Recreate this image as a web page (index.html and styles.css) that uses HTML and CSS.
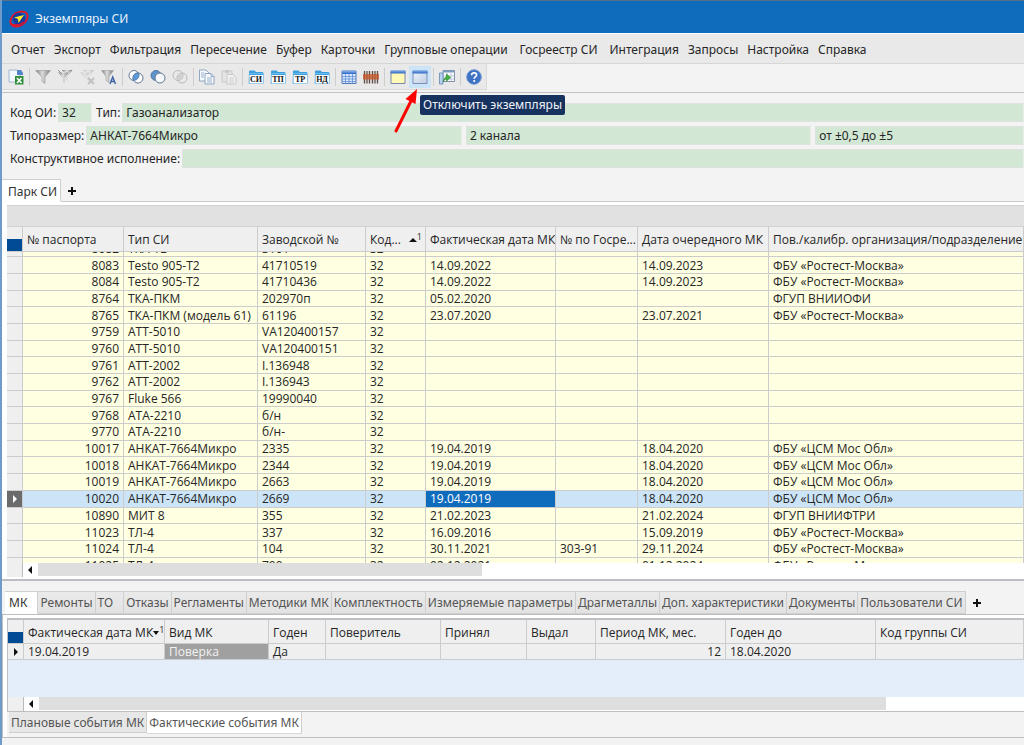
FILE: index.html
```html
<!DOCTYPE html>
<html lang="ru">
<head>
<meta charset="utf-8">
<title>Экземпляры СИ</title>
<link rel="stylesheet" href="styles.css">
</head>
<body>
<svg class="defs" width="0" height="0" aria-hidden="true">
  <defs>
    <linearGradient id="gray" x1="0" x2="1" y1="0" y2="0"><stop offset="0" stop-color="#777"/><stop offset=".45" stop-color="#ddd"/><stop offset="1" stop-color="#777"/></linearGradient>
    <linearGradient id="blue" x1="0" x2="0" y1="0" y2="1"><stop offset="0" stop-color="#7fb0ee"/><stop offset="1" stop-color="#2f66c4"/></linearGradient>
    <linearGradient id="pane" x1="0" x2="1" y1="0" y2="1"><stop offset="0" stop-color="#eef3fa"/><stop offset="1" stop-color="#bfcde2"/></linearGradient>
    <symbol id="folder" viewBox="0 0 16 16"><path d="M1 2.5Q1 1.500 2 1.500h4.500l1.500 1.500h6q1.500 0 1.500 1v10q0 1-1 1h-13q-.8 0-.8-1z" fill="#3f9fdc"/><path d="M1.500 6h13.500v8.500h-13.500z" fill="#fff"/><path d="M1 4.500h14" stroke="#69bdf0"/></symbol>
  </defs>
</svg>
<div class="window">
  <header class="titlebar">
    <svg class="logo" viewBox="0 0 22 20" width="22" height="20"><ellipse cx="11" cy="10" rx="9.500" ry="6.500" transform="rotate(-35 11 10)" fill="none" stroke="#e3152d" stroke-width="2"/><circle cx="11" cy="10" r="6.300" fill="#173a9c"/><path d="M3 15q7 3 13-2" fill="none" stroke="#e3152d" stroke-width="1.500"/><path d="M6 8.500l10-2.500-5.500 8-.5-4z" fill="#ffed28"/></svg>
    <h1 class="title">Экземпляры СИ</h1>
  </header>
  <nav class="menu">
    <button>Отчет</button><button>Экспорт</button><button>Фильтрация</button><button>Пересечение</button><button>Буфер</button><button>Карточки</button><button class="wide">Групповые операции</button><button class="wide">Госреестр СИ</button><button>Интеграция</button><button>Запросы</button><button>Настройка</button><button>Справка</button>
  </nav>
  <div class="toolbar-row">
    <div class="toolbar">
      <button class="tool" aria-label="Экспорт в Excel"><svg viewBox="0 0 16 16"><path d="M1 1h8l3 3v9H1z" fill="#f3f8ff" stroke="#a0b4d0"/><path d="M9 1h4l2 3v2h-6z" fill="#5484c8"/><path d="M7 7h8.500v8.500H7z" fill="#31903c"/><path d="M9 9l4.500 5M13.500 9L9 14" stroke="#fff" stroke-width="1.600"/></svg></button>
      <span class="sep"></span>
      <button class="tool" aria-label="Фильтр"><svg viewBox="0 0 16 16"><path d="M.5 1.500h15L10 8v6.500l-3-2V8z" fill="url(#gray)" stroke="#999" stroke-width=".6"/></svg></button>
      <button class="tool" aria-label="Фильтр по значению"><svg viewBox="0 0 16 16"><path d="M5 1h10.500l-5 6v5l-2-1.500V7z" fill="url(#gray)"/><path d="M.5 3h12L8 9v6l-2.800-2V9z" fill="url(#gray)" stroke="#f0f0f0" stroke-width=".7"/><path d="M1 1l4 4" stroke="#999"/></svg></button>
      <button class="tool faded" aria-label="Снять фильтр"><svg viewBox="0 0 16 16"><path d="M4 1h11l-5 6v5L8 10V7z" fill="url(#gray)"/><path d="M.5 3h11L7 9v5l-2-2V9z" fill="url(#gray)" stroke="#eee"/><path d="M9 9l6 6M15 9l-6 6" stroke="#888" stroke-width="2"/></svg></button>
      <button class="tool" aria-label="Автофильтр"><svg viewBox="0 0 16 16"><path d="M.5 1.500h12L8 7.500v6l-3-2v-4z" fill="url(#gray)" stroke="#999" stroke-width=".5"/><path d="M9 15l2.700-7L14.500 15M10 12.500h3.500" fill="none" stroke="#3d63a6" stroke-width="1.400"/></svg></button>
      <span class="sep"></span>
      <button class="tool" aria-label="Пересечение"><svg viewBox="0 0 16 16"><g fill="#fff" stroke="#607894"><circle cx="6" cy="6.500" r="5"/><circle cx="10" cy="9" r="5"/></g><path d="M5.300 7.300A5 5 0 0 1 10.700 4.100 5 5 0 0 1 10.400 8.800 5 5 0 0 1 5.600 11.400a5 5 0 0 1-.3-4.100z" fill="#5d9bd8" stroke="#47719d" stroke-width=".7"/></svg></button>
      <button class="tool" aria-label="Вычитание"><svg viewBox="0 0 16 16"><circle cx="6" cy="6.500" r="5" fill="#5d94cb" stroke="#53779f"/><circle cx="10" cy="9" r="5" fill="#f6f9fc" stroke="#607894"/></svg></button>
      <button class="tool faded" aria-label="Очистить пересечение"><svg viewBox="0 0 16 16"><g fill="none" stroke="#777"><circle cx="6" cy="6.500" r="5"/><circle cx="10" cy="9" r="5"/></g><path d="M5.300 9Q6 5 10.700 5 11 10 5.300 11z" fill="#aaa"/></svg></button>
      <span class="sep"></span>
      <button class="tool" aria-label="Копировать"><svg viewBox="0 0 16 16"><g fill="#f5f9ff" stroke="#879db8" stroke-width=".9"><path d="M.5 1h6.500l3 3v8H.5z"/><path d="M6 4.500h6l3 3V15H6z"/></g><path d="M2 4h3M2 6h3M2 8h3M8 9h5M8 11h5M8 13h5M12 4.500v3h3" fill="none" stroke="#91a8c3" stroke-width=".9"/></svg></button>
      <button class="tool faded" aria-label="Вставить"><svg viewBox="0 0 16 16"><path d="M1 2h10v11H1z" fill="#ddd" stroke="#999"/><path d="M4 1h4v3H4z" fill="#999"/><path d="M6 5.500h6l3 3V15H6z" fill="#fff" stroke="#999"/><path d="M8 9h5M8 11h5M8 13h5" stroke="#aaa"/></svg></button>
      <span class="sep"></span>
      <button class="tool folder"><svg viewBox="0 0 16 16"><use href="#folder"/></svg><span>СИ</span></button>
      <button class="tool folder"><svg viewBox="0 0 16 16"><use href="#folder"/></svg><span>ТП</span></button>
      <button class="tool folder"><svg viewBox="0 0 16 16"><use href="#folder"/></svg><span>ТР</span></button>
      <button class="tool folder"><svg viewBox="0 0 16 16"><use href="#folder"/></svg><span>НД</span></button>
      <span class="sep"></span>
      <button class="tool" aria-label="Таблица"><svg viewBox="0 0 16 16"><path d="M1 2h14v12.500H1z" fill="#dbe8fb" stroke="#5379b8"/><path d="M1 2h14v3H1z" fill="url(#blue)"/><path d="M4.500 5v9M8 5v9M11.500 5v9M1 7.500h14M1 10h14M1 12.500h14" stroke="#5e8ed8" stroke-width=".8"/></svg></button>
      <button class="tool" aria-label="Штрихкод"><svg viewBox="0 0 16 16"><path d="M.5 2h15v12.500H.5z" fill="#ddd6d2"/><path d="M1.500 2v12.500M4 2v12.500M6.500 2v12.500M9.500 2v12.500M12 2v12.500M14.500 2v12.500" stroke="#5a5350" stroke-width="1.200"/><path d="M0 5h16v5.500H0z" fill="#c65a2a" opacity=".8"/></svg></button>
      <span class="sep"></span>
      <button class="tool" aria-label="Окно"><svg viewBox="0 0 16 16"><path d="M1 2h14v12.500H1z" fill="#fff9b5" stroke="#788bad"/><path d="M.5 1.500h15v3H.5z" fill="url(#blue)"/></svg></button>
      <button class="tool active" aria-label="Отключить экземпляры" aria-describedby="tip"><svg viewBox="0 0 16 16"><path d="M1 2h14v12.500H1z" fill="url(#pane)" stroke="#7890b8"/><path d="M.5 1.500h15v3H.5z" fill="url(#blue)"/></svg></button>
      <span class="sep"></span>
      <button class="tool" aria-label="Перенос в таблицу"><svg viewBox="0 0 16 16"><path d="M4 1.500h11.500v11H4z" fill="#fff" stroke="#8191aa"/><path d="M4 1.500h11.500v2H4z" fill="#7d9cc4"/><path d="M8 4v8M12 4v8M4 7h11M4 10h11" stroke="#a9bad0" stroke-width=".8"/><path d="M.5 4h3.500v11h-3.500z" fill="#b5d2f0" stroke="#6685ad" stroke-width=".8"/><path d="M4 13q1-4.500 3.500-5.500V5l4 3.500-4 3.500V9.800q-2 0-3.500 3.200z" fill="#45b53a" stroke="#267e29" stroke-width=".6"/></svg></button>
      <span class="sep"></span>
      <button class="tool help" aria-label="Помощь"><svg viewBox="0 0 16 16"><circle cx="8" cy="8" r="7.300" fill="#3e72c5" stroke="#7398d2"/><path d="M5.600 6.200Q5.700 3.900 8.100 3.900q2.500 0 2.500 2.100 0 1-1.300 1.900-1.100.7-1.100 1.800" fill="none" stroke="#fff" stroke-width="1.700"/><circle cx="8.200" cy="12" r="1.100" fill="#fff"/></svg></button>
      <div class="tooltip" id="tip" role="tooltip">Отключить экземпляры</div>
      <svg class="arrow" viewBox="0 0 30 46" width="30" height="46" aria-hidden="true"><path d="M3 43L18 13" stroke="#f00" stroke-width="3" stroke-linecap="round"/><path d="M24 1L12.500 11 22.500 16z" fill="#f00"/></svg>
    </div>
  </div>

  <form class="card">
    <div class="line">
      <label for="code">Код ОИ:</label><input id="code" class="code" value="32" readonly>
      <label for="type" class="next">Тип:</label><input id="type" value="Газоанализатор" readonly>
    </div>
    <div class="line">
      <label for="size">Типоразмер:</label><input id="size" class="size" value="АНКАТ-7664Микро" readonly>
      <input class="channels" aria-label="Каналы" value="2 канала" readonly><input class="range" aria-label="Диапазон" value="от ±0,5 до ±5" readonly>
    </div>
    <div class="line">
      <label for="design">Конструктивное исполнение:</label><input id="design" readonly>
    </div>
  </form>

  <section class="park">
    <div class="tabs main-tabs"><button class="tab on">Парк СИ</button><button class="add" aria-label="Добавить вкладку"><svg viewBox="0 0 10 10"><path d="M5 1v8M1 5h8" stroke="#111" stroke-width="2"/></svg></button></div>
    <div class="sheet">
      <div class="group"></div>
      <table class="grid heads">
        <colgroup><col class="c0"><col class="c1"><col class="c2"><col class="c3"><col class="c4"><col class="c5"><col class="c6"><col class="c7"><col></colgroup>
        <thead><tr><th class="corner"></th><th>№ паспорта</th><th>Тип СИ</th><th>Заводской №</th><th><span class="sorted">Код...<span class="mark up"></span><sup>1</sup></span></th><th>Фактическая дата МК</th><th>№ по Госре...</th><th>Дата очередного МК</th><th>Пов./калибр. организация/подразделение - п</th></tr></thead>
      </table>
      <div class="viewport">
        <table class="grid rows">
          <colgroup><col class="c0"><col class="c1"><col class="c2"><col class="c3"><col class="c4"><col class="c5"><col class="c6"><col class="c7"><col></colgroup>
          <tbody>
            <tr><th></th><td>8082</td><td>ТКА-ТВ</td><td>3101</td><td>32</td><td></td><td></td><td></td><td></td></tr>
            <tr><th></th><td>8083</td><td>Testo 905-T2</td><td>41710519</td><td>32</td><td>14.09.2022</td><td></td><td>14.09.2023</td><td>ФБУ «Ростест-Москва»</td></tr>
            <tr><th></th><td>8084</td><td>Testo 905-T2</td><td>41710436</td><td>32</td><td>14.09.2022</td><td></td><td>14.09.2023</td><td>ФБУ «Ростест-Москва»</td></tr>
            <tr><th></th><td>8764</td><td>ТКА-ПКМ</td><td>202970п</td><td>32</td><td>05.02.2020</td><td></td><td></td><td>ФГУП ВНИИОФИ</td></tr>
            <tr><th></th><td>8765</td><td>ТКА-ПКМ (модель 61)</td><td>61196</td><td>32</td><td>23.07.2020</td><td></td><td>23.07.2021</td><td>ФБУ «Ростест-Москва»</td></tr>
            <tr><th></th><td>9759</td><td>АТТ-5010</td><td>VA120400157</td><td>32</td><td></td><td></td><td></td><td></td></tr>
            <tr><th></th><td>9760</td><td>АТТ-5010</td><td>VA120400151</td><td>32</td><td></td><td></td><td></td><td></td></tr>
            <tr><th></th><td>9761</td><td>АТТ-2002</td><td>I.136948</td><td>32</td><td></td><td></td><td></td><td></td></tr>
            <tr><th></th><td>9762</td><td>АТТ-2002</td><td>I.136943</td><td>32</td><td></td><td></td><td></td><td></td></tr>
            <tr><th></th><td>9767</td><td>Fluke 566</td><td>19990040</td><td>32</td><td></td><td></td><td></td><td></td></tr>
            <tr><th></th><td>9768</td><td>АТА-2210</td><td>б/н</td><td>32</td><td></td><td></td><td></td><td></td></tr>
            <tr><th></th><td>9770</td><td>АТА-2210</td><td>б/н-</td><td>32</td><td></td><td></td><td></td><td></td></tr>
            <tr><th></th><td>10017</td><td>АНКАТ-7664Микро</td><td>2335</td><td>32</td><td>19.04.2019</td><td></td><td>18.04.2020</td><td>ФБУ «ЦСМ Мос Обл»</td></tr>
            <tr><th></th><td>10018</td><td>АНКАТ-7664Микро</td><td>2344</td><td>32</td><td>19.04.2019</td><td></td><td>18.04.2020</td><td>ФБУ «ЦСМ Мос Обл»</td></tr>
            <tr><th></th><td>10019</td><td>АНКАТ-7664Микро</td><td>2663</td><td>32</td><td>19.04.2019</td><td></td><td>18.04.2020</td><td>ФБУ «ЦСМ Мос Обл»</td></tr>
            <tr class="selected"><th><span class="pointer"></span></th><td>10020</td><td>АНКАТ-7664Микро</td><td>2669</td><td>32</td><td class="focus">19.04.2019</td><td></td><td>18.04.2020</td><td>ФБУ «ЦСМ Мос Обл»</td></tr>
            <tr><th></th><td>10890</td><td>МИТ 8</td><td>355</td><td>32</td><td>21.02.2023</td><td></td><td>21.02.2024</td><td>ФГУП ВНИИФТРИ</td></tr>
            <tr><th></th><td>11023</td><td>ТЛ-4</td><td>337</td><td>32</td><td>16.09.2016</td><td></td><td>15.09.2019</td><td>ФБУ «Ростест-Москва»</td></tr>
            <tr><th></th><td>11024</td><td>ТЛ-4</td><td>104</td><td>32</td><td>30.11.2021</td><td>303-91</td><td>29.11.2024</td><td>ФБУ «Ростест-Москва»</td></tr>
            <tr><th></th><td>11025</td><td>ТЛ-4</td><td>790</td><td>32</td><td>02.12.2021</td><td></td><td>01.12.2024</td><td>ФБУ «Ростест-Москва»</td></tr>
          </tbody>
        </table>
      </div>
      <div class="scroll"><span class="foot"></span><button class="left" aria-label="Прокрутить влево"></button><span class="track"><span class="thumb main-thumb"></span></span></div>
    </div>
  </section>

  <section class="detail">
    <div class="tabs detail-tabs"><button class="tab on">МК</button><button class="tab">Ремонты</button><button class="tab to">ТО</button><button class="tab">Отказы</button><button class="tab">Регламенты</button><button class="tab">Методики МК</button><button class="tab">Комплектность</button><button class="tab">Измеряемые параметры</button><button class="tab">Драгметаллы</button><button class="tab">Доп. характеристики</button><button class="tab">Документы</button><button class="tab">Пользователи СИ</button><button class="add" aria-label="Добавить вкладку"><svg viewBox="0 0 10 10"><path d="M5 1v8M1 5h8" stroke="#111" stroke-width="2"/></svg></button></div>
    <div class="frame">
      <div class="inner">
        <table class="grid events">
          <colgroup><col class="c0"><col class="d1"><col class="d2"><col class="d3"><col class="d4"><col class="d5"><col class="d6"><col class="d7"><col class="d8"><col></colgroup>
          <thead><tr><th class="corner"></th><th class="tight"><span class="sorted">Фактическая дата МК<span class="mark down"></span><sup>1</sup></span></th><th>Вид МК</th><th>Годен</th><th>Поверитель</th><th>Принял</th><th>Выдал</th><th>Период МК, мес.</th><th>Годен до</th><th>Код группы СИ</th></tr></thead>
          <tbody><tr><th><span class="pointer dark"></span></th><td>19.04.2019</td><td class="kind">Поверка</td><td>Да</td><td></td><td></td><td></td><td class="num">12</td><td>18.04.2020</td><td></td></tr></tbody>
        </table>
        <div class="empty"></div>
        <div class="scroll"><span class="foot"></span><button class="left" aria-label="Прокрутить влево"></button><span class="track"><span class="thumb detail-thumb"></span></span></div>
      </div>
      <div class="tabs bottom-tabs"><button class="tab">Плановые события МК</button><button class="tab on">Фактические события МК</button></div>
    </div>
  </section>
</div>
</body>
</html>
```
FILE: styles.css
```css
* { box-sizing: border-box; }
html, body { height: 100%; }
body {
  margin: 0;
  overflow: hidden;
  background: #6f9bc8;
  color: #262626;
  font: 12px/16px "Noto Sans", "Open Sans", sans-serif;
}
button, input {
  margin: 0;
  padding: 0;
  border: 0;
  border-radius: 0;
  background: none;
  color: inherit;
  font: inherit;
}
.defs { position: absolute; }
.window {
  display: flex;
  flex-direction: column;
  min-height: 100%;
  margin-left: 2px;
  background: #f3f3f3;
}

.titlebar {
  display: flex;
  align-items: center;
  gap: 5px;
  height: 33px;
  padding: 3px 6px 0;
  border-top: 1px solid #5a6f85;
  background: #0f6cbd;
  color: #e8f1fa;
}
.title { margin: 0; font-size: 12px; font-weight: 400; }

.menu {
  display: flex;
  align-items: center;
  gap: 9px;
  height: 31px;
  padding: 2px 9px 0;
  border-top: 1px solid #fff;
  border-bottom: 1px solid #d6d6d6;
  background: #e9e9e9;
  white-space: nowrap;
}
.menu .wide { margin-right: 3px; }

.toolbar-row {
  display: flex;
  height: 29px;
  border-bottom: 1px solid #c2c2c2;
}
.toolbar {
  position: relative;
  display: flex;
  align-items: center;
  height: 26px;
  padding: 0 1px 0 3px;
  border-right: 1px solid #dadada;
  border-bottom: 1px solid #dadada;
  background: #e9e9e9;
}
.tool {
  display: flex;
  align-items: center;
  justify-content: center;
  width: 22px;
  height: 22px;
}
.tool svg { width: 16px; height: 16px; }
.folder { position: relative; }
.folder span {
  position: absolute;
  inset: 9px 0 auto;
  color: #111;
  font: bold 8px/10px "Liberation Serif", serif;
  text-align: center;
}
.faded { opacity: .4; }
.active { background: #cce4f7; }
.sep {
  width: 1px;
  height: 18px;
  margin: 0 2px;
  background: #cdcdcd;
}
.tooltip {
  position: absolute;
  z-index: 2;
  top: 31px;
  left: 418px;
  padding: 2px 3px;
  border-radius: 2px;
  background: #17325f;
  color: #f0f3f8;
  white-space: nowrap;
}
.arrow {
  position: absolute;
  z-index: 3;
  top: 24px;
  left: 391px;
}

.card {
  display: flex;
  flex-direction: column;
  gap: 4px;
  padding: 10px 0 11px 8px;
}
.line { display: flex; gap: 2px; align-items: center; white-space: nowrap; }
.line input {
  flex: 1 1 0;
  min-width: 0;
  height: 19px;
  padding: 0 3px;
  border: 1px solid #dfe3df;
  border-right-color: #e8ede8;
  background: #d2e8d4;
}
.line .code { flex: 0 0 34px; }
.line .next { margin-left: 2px; }
.line .size { flex: 377 1 0; }
.line .channels { flex: 346 1 0; margin: 0 2px; }
.line .range { flex: 206 1 0; }

.tabs { display: flex; white-space: nowrap; }
.tab {
  padding: 0 4px;
  border: 1px solid #cfcfcf;
  border-left-width: 0;
  background: #e7e7e7;
  color: #555;
}
.tab.on { border-bottom-color: #fff; background: #fff; color: #333; }
.add { padding: 0 6px; }
.add svg { display: block; width: 10px; height: 10px; }

.main-tabs { height: 23px; border-bottom: 1px solid #c9c9ce; }
.main-tabs .tab { height: 23px; padding: 3px 3px 0 6px; }
.main-tabs .add { padding-top: 2px; }
.sheet {
  padding: 3px 0 2px 5px;
  border-bottom: 2px solid #bdbdc4;
  background: #fff;
}
.group { height: 22px; border: 1px solid #d2d2d2; border-width: 1px 0; background: #e1e1e1; }
.grid {
  width: 100%;
  border-collapse: separate;
  border-spacing: 0;
  table-layout: fixed;
  font-family: "Open Sans", "Noto Sans", sans-serif;
  line-height: 15px;
}
.grid th, .grid td {
  overflow: hidden;
  padding: 0 4px;
  border-right: 1px solid #cccccc;
  border-bottom: 1px solid #cccccc;
  font-weight: 400;
  text-align: left;
  white-space: nowrap;
}
.grid thead th { height: 25px; padding: 1px 0 0 4px; background: #efefef; }
.grid thead .corner { background: linear-gradient(#efefef 12px, #004b93 12px); }
.grid tbody th { padding: 0; background: #efefef; }
.c0 { width: 16px; }
.c1 { width: 101px; }
.c2 { width: 134px; }
.c3 { width: 108px; }
.c4 { width: 60px; }
.c5 { width: 130px; }
.c6 { width: 82px; }
.c7 { width: 131px; }
.sorted { display: flex; align-items: center; padding-right: 3px; }
.tight .sorted { padding-right: 0; }
.sorted sup { align-self: flex-start; font-size: 9px; line-height: 9px; }
.mark { border: 4px solid transparent; }
.up { margin-left: auto; border-top: 0; border-bottom-color: #111; }
.down { border-width: 4px 3px 0; border-top-color: #111; }

.viewport {
  display: flex;
  align-items: center;
  height: 311px;
  overflow: hidden;
}
.rows { flex: none; height: 334px; }
.rows td { background: #ffffe1; }
.rows td:nth-child(2) { text-align: right; }
.rows .selected td { background: #cce4f7; }
.rows .selected th { background: #6b6b6b; }
.rows .selected .focus { background: #0f6cbd; color: #fff; }
.pointer {
  display: block;
  width: 4px;
  margin: 0 auto;
  border: 4px solid transparent;
  border-right: 0;
  border-left-color: #fff;
}
.dark { border-left-color: #111; }

.scroll { display: flex; height: 14px; background: #fff; }
.foot { width: 16px; border-right: 1px solid #bbb; background: #efefef; }
.left {
  width: 4px;
  height: 8px;
  margin: 3px 6px 3px 5px;
  border: 4px solid transparent;
  border-left: 0;
  border-right-color: #111;
}
.track { display: flex; flex: 1; height: 13px; }
.thumb { background: #dedede; }
.main-thumb { width: 45%; }
.detail-thumb { width: 86%; }

.detail { margin-top: 10px; }
.detail-tabs { height: 23px; padding-left: 3px; }
.detail-tabs .tab { height: 23px; padding: 1px 2px 0; background: linear-gradient(#eaeaea, #e2e2e2); }
.detail-tabs .tab.on { padding: 1px 10px 0 4px; background: #fff; }
.detail-tabs .to { padding-right: 10px; }
.detail-tabs .add { padding-top: 1px; }
.frame {
  padding: 3px 0 3px 4px;
  border: 1px solid #bdbdc4;
  border-right: 0;
  background: #f3f3f3;
  box-shadow: inset 0 4px #fff, inset 4px 0 #fff;
}
.inner { border: 1px solid #bdbdc4; border-top-width: 2px; border-right: 0; }
.events thead th { height: 24px; padding-top: 2px; }
.events td { height: 16px; background: #efefef; }
.events .kind { background: #a0a0a0; color: #f2f2f2; }
.events .num { text-align: right; }
.d1 { width: 141px; }
.d2 { width: 104px; }
.d3 { width: 57px; }
.d4 { width: 115px; }
.d5 { width: 86px; }
.d6 { width: 69px; }
.d7 { width: 130px; }
.d8 { width: 150px; }
.empty { height: 37px; background: #e3eefa; }
.bottom-tabs { padding-left: 2px; }
.bottom-tabs .tab { height: 21px; padding: 1px 2px 0; border-top-width: 0; }
.bottom-tabs .tab.on { height: 22px; color: #555; border-bottom-color: #d8d8d8; }
```
